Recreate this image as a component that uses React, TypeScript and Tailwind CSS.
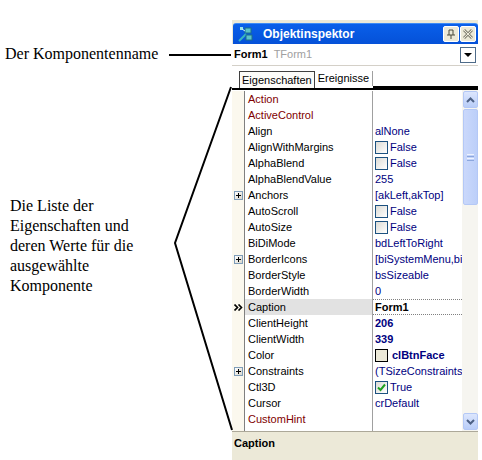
import React from 'react';

type Row = {
  name: string;
  value?: string;
  red?: boolean;
  plus?: boolean;
  check?: boolean;
  swatch?: boolean;
  bold?: boolean;
  selected?: boolean;
};

const rows: Row[] = [
  { name: 'Action', red: true },
  { name: 'ActiveControl', red: true },
  { name: 'Align', value: 'alNone' },
  { name: 'AlignWithMargins', check: false, value: 'False' },
  { name: 'AlphaBlend', check: false, value: 'False' },
  { name: 'AlphaBlendValue', value: '255' },
  { name: 'Anchors', plus: true, value: '[akLeft,akTop]' },
  { name: 'AutoScroll', check: false, value: 'False' },
  { name: 'AutoSize', check: false, value: 'False' },
  { name: 'BiDiMode', value: 'bdLeftToRight' },
  { name: 'BorderIcons', plus: true, value: '[biSystemMenu,biMinimize,biMaximize]' },
  { name: 'BorderStyle', value: 'bsSizeable' },
  { name: 'BorderWidth', value: '0' },
  { name: 'Caption', value: 'Form1', selected: true },
  { name: 'ClientHeight', value: '206', bold: true },
  { name: 'ClientWidth', value: '339', bold: true },
  { name: 'Color', swatch: true, value: 'clBtnFace', bold: true },
  { name: 'Constraints', plus: true, value: '(TSizeConstraints)' },
  { name: 'Ctl3D', check: true, value: 'True' },
  { name: 'Cursor', value: 'crDefault' },
  { name: 'CustomHint', red: true },
  { name: 'DefaultMonitor', value: 'dmActiveForm' },
];

function CheckBox({ checked }: { checked: boolean }) {
  return (
    <span className="mr-[2px] flex h-[13px] w-[13px] shrink-0 items-center justify-center border border-[#1C5180] bg-gradient-to-br from-[#DCDBD5] to-white">
      {checked && (
        <svg width="9" height="9" viewBox="0 0 9 9">
          <path d="M1 4.5 L3.5 7 L8 1.5" fill="none" stroke="#21A121" strokeWidth="2" />
        </svg>
      )}
    </span>
  );
}

function PlusBox() {
  return (
    <span className="flex h-[9px] w-[9px] items-center justify-center border border-[#7F9DB9] bg-gradient-to-br from-white to-[#D8D6CC]">
      <svg width="5" height="5" viewBox="0 0 5 5">
        <path d="M0 2.5 H5 M2.5 0 V5" stroke="#000" strokeWidth="1" />
      </svg>
    </span>
  );
}

function SelectedMarker() {
  return (
    <svg width="9" height="7" viewBox="0 0 9 7">
      <path d="M0.5 0.5 L3.5 3.5 L0.5 6.5 M4.5 0.5 L7.5 3.5 L4.5 6.5" fill="none" stroke="#000" strokeWidth="1.6" />
    </svg>
  );
}

function ScrollButton({ down }: { down?: boolean }) {
  return (
    <div className="flex h-[17px] w-[15px] items-center justify-center rounded-[2px] border border-[#B4C8F6] bg-gradient-to-b from-[#DCE6FD] to-[#B9CDF8]">
      <svg width="9" height="6" viewBox="0 0 9 6">
        <path
          d={down ? 'M1 1 L4.5 4.5 L8 1' : 'M1 5 L4.5 1.5 L8 5'}
          fill="none"
          stroke="#4D6185"
          strokeWidth="2"
        />
      </svg>
    </div>
  );
}

function PropertyRow({ row }: { row: Row }) {
  const valueColor = row.selected ? 'text-black' : 'text-[#000080]';
  return (
    <div className="flex h-[16px] shrink-0 items-stretch">
      <div className="flex w-[13px] shrink-0 items-center justify-center border-r border-[#808080] bg-[#FBF8EE]">
        {row.plus && <PlusBox />}
        {row.selected && <SelectedMarker />}
      </div>
      <div
        className={`flex w-[128px] shrink-0 items-center border-r border-[#A0A0A0] pl-[3px] ${
          row.selected ? 'bg-[#E2E2E2]' : 'bg-white'
        } ${row.red ? 'text-[#800000]' : 'text-black'}`}
      >
        {row.name}
      </div>
      <div
        className={`flex min-w-0 flex-1 items-center overflow-hidden whitespace-nowrap bg-white pl-[2px] ${valueColor} ${
          row.bold || row.selected ? 'font-bold' : ''
        } ${row.selected ? 'border-y border-dotted border-[#808080]' : ''}`}
      >
        {row.check !== undefined && <CheckBox checked={row.check} />}
        {row.swatch && (
          <span className="mr-[4px] h-[13px] w-[13px] shrink-0 border border-black bg-[#ECE9D8]" />
        )}
        {row.value}
      </div>
    </div>
  );
}

function TitleIcon() {
  return (
    <svg width="16" height="16" viewBox="0 0 16 16">
      <rect x="7" y="2" width="6" height="5" fill="#5BC2C9" stroke="#1B6F8A" />
      <rect x="2" y="1" width="3" height="3" fill="#9BE3E8" />
      <path d="M1 15 L8 8" stroke="#37B5C0" strokeWidth="2" />
      <rect x="8" y="9" width="6" height="5" fill="#5BC2C9" stroke="#1B6F8A" />
      <path d="M4 3 L7 5" stroke="#C9F1F3" strokeWidth="1" />
    </svg>
  );
}

function TitleButton({ kind }: { kind: 'pin' | 'close' }) {
  return (
    <div className="flex h-[16px] w-[16px] items-center justify-center rounded-[2px] border border-white bg-[#ECE9D8]">
      {kind === 'pin' ? (
        <svg width="10" height="10" viewBox="0 0 10 10">
          <path d="M3 1 V6 M7 1 V6 M3 1 H7 M1 6 H9 M5 6 V10" stroke="#4B4B3D" strokeWidth="1" fill="none" />
        </svg>
      ) : (
        <svg width="10" height="10" viewBox="0 0 10 10">
          <path d="M1 1 L9 9 M9 1 L1 9" stroke="#8C8A7D" strokeWidth="3" />
          <path d="M1 1 L9 9 M9 1 L1 9" stroke="#ECE9D8" strokeWidth="1" />
        </svg>
      )}
    </div>
  );
}

export default function App() {
  return (
    <div className="relative flex h-[460px] w-[482px] overflow-hidden bg-white font-['Liberation_Sans',Arial,sans-serif] text-[11px]">
      {/* Annotations */}
      <div className="flex w-[232px] shrink-0 flex-col font-['Liberation_Serif','Times_New_Roman',serif] text-[16px] leading-[20px] text-black">
        <div className="mt-[44px] pl-[5px]">Der Komponentenname</div>
        <div className="mt-[132px] pl-[10px]">
          Die Liste der
          <br />
          Eigenschaften und
          <br />
          deren Werte für die
          <br />
          ausgewählte
          <br />
          Komponente
        </div>
      </div>

      {/* Objektinspektor */}
      <div className="mt-[20px] flex w-[246px] shrink-0 flex-col bg-[#ECE9D8] pt-[3px]">
        <div className="ml-px flex h-[21px] shrink-0 items-center rounded-t-[3px] border-t border-[#3D8BF6] bg-gradient-to-b from-[#0A5FEA] to-[#0551D8] pl-[5px] pr-[2px]">
          <TitleIcon />
          <span className="ml-[9px] flex-1 text-[12px] font-bold text-white">Objektinspektor</span>
          <div className="flex gap-px">
            <TitleButton kind="pin" />
            <TitleButton kind="close" />
          </div>
        </div>

        <div className="flex h-[21px] shrink-0 items-center bg-white pl-[2px] pr-[2px]">
          <span className="font-bold text-black">Form1</span>
          <span className="ml-[6px] flex-1 text-[#A0A0A0]">TForm1</span>
          <div className="flex h-[16px] w-[16px] items-center justify-center border border-[#4E6B89] bg-white">
            <svg width="8" height="4" viewBox="0 0 8 4">
              <path d="M0 0 H8 L4 4 Z" fill="#000" />
            </svg>
          </div>
        </div>

        <div className="flex h-[23px] shrink-0 items-end border-t border-[#D4D0C8] bg-white pl-[7px]">
          <div className="flex h-[17px] items-center border-x border-t border-[#404040] bg-[#FCFCF9] px-[2px] text-black">
            Eigenschaften
          </div>
          <div className="mb-[2px] flex h-[15px] items-center border-r border-[#A0A0A0] px-[3px] text-black">
            Ereignisse
          </div>
          <div className="h-[2px] flex-1 bg-black" />
        </div>

        <div className="flex h-[343px] shrink-0 border-t-2 border-black bg-white">
          <div className="flex flex-1 flex-col overflow-hidden pt-px">
            {rows.map((r) => (
              <PropertyRow key={r.name} row={r} />
            ))}
          </div>
          <div className="flex w-[16px] shrink-0 flex-col items-center bg-[#F6F5F0] pb-px pt-[1px]">
            <ScrollButton />
            <div className="mt-px flex h-[96px] w-[15px] items-center justify-center rounded-[2px] border border-[#B4C8F6] bg-gradient-to-r from-[#CAD8FB] to-[#BCCFF9]">
              <div className="flex flex-col gap-px">
                <div className="h-px w-[7px] bg-[#EEF3FE]" />
                <div className="h-px w-[7px] bg-[#8CA7DE]" />
                <div className="h-px w-[7px] bg-[#EEF3FE]" />
                <div className="h-px w-[7px] bg-[#8CA7DE]" />
              </div>
            </div>
            <div className="flex-1" />
            <ScrollButton down />
          </div>
        </div>

        <div className="flex h-[29px] shrink-0 border-t border-[#ACA899] bg-[#ECE9D8] pl-[2px] pt-[3px]">
          <span className="font-bold text-black">Caption</span>
        </div>
      </div>

      {/* Pointer lines */}
      <svg className="pointer-events-none absolute left-0 top-0" width="482" height="460">
        <path d="M169 55 H231" stroke="#000" strokeWidth="2" />
        <path d="M231 87 L175 243 L232 430" fill="none" stroke="#000" strokeWidth="2" />
      </svg>
    </div>
  );
}
